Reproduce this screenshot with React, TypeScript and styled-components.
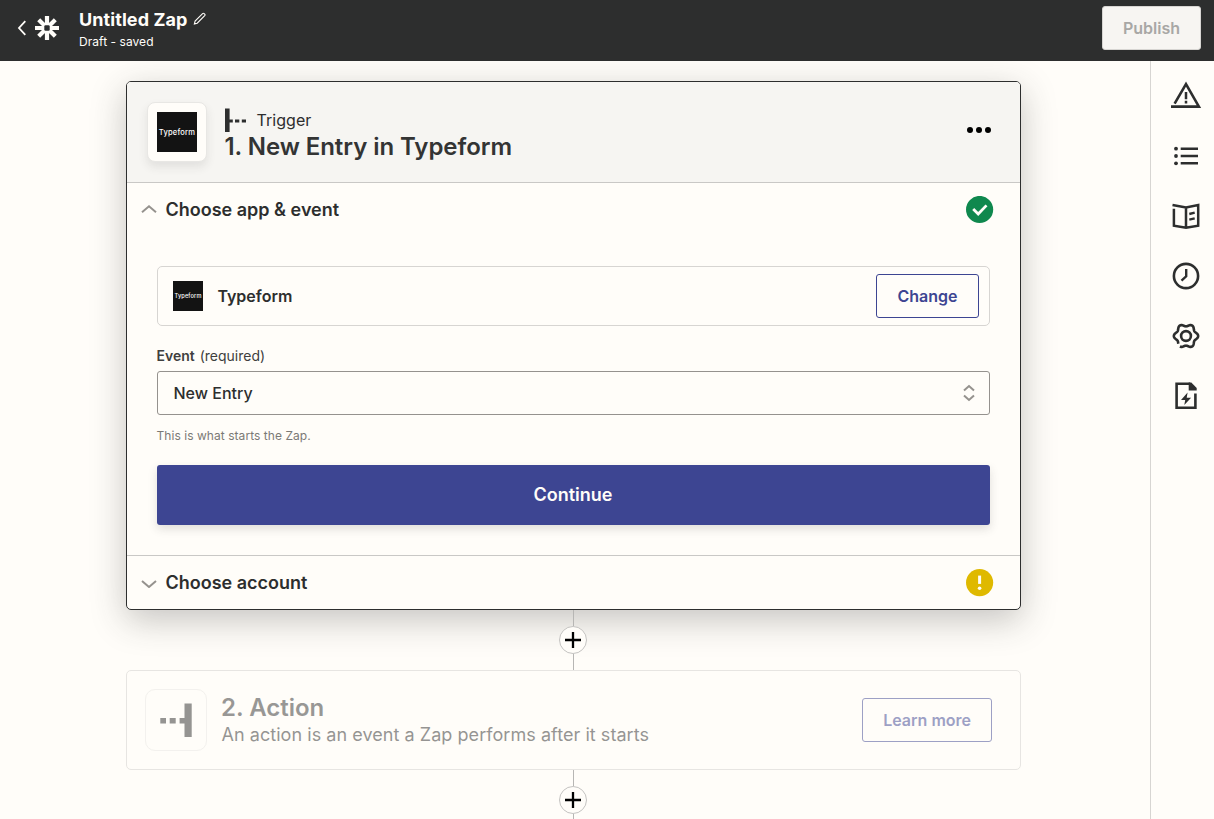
import React from 'react';
import styled, { createGlobalStyle } from 'styled-components';

const ink = '#2d2e2e';
const paper = '#fffdf9';
const indigo = '#3d4592';

const GlobalStyle = createGlobalStyle`
  *, *::before, *::after { box-sizing: border-box; }
  body {
    margin: 0;
    background: ${paper};
    color: ${ink};
    font-family: Inter, "Liberation Sans", sans-serif;
    overflow: hidden;
  }
  button { font-family: inherit; margin: 0; }
  svg { display: block; flex: none; }
`;

const Page = styled.div`
  display: flex;
  flex-direction: column;
  height: 100vh;
`;

const TopBar = styled.header`
  display: flex;
  align-items: flex-start;
  flex: none;
  height: 61px;
  padding: 6px 13px 0 17px;
  background: ${ink};
  color: ${paper};
`;

const BackLink = styled.div`
  display: flex;
  align-items: center;
  gap: 8px;
  height: 44px;
`;

const ZapTitle = styled.div`
  flex: 1;
  margin: 3px 0 0 20px;
`;

const TitleLine = styled.div`
  display: flex;
  align-items: center;
  gap: 6px;
  font-size: 18px;
  line-height: 22px;
  font-weight: 700;
  letter-spacing: 0.08px;
`;

const PencilIcon = styled.svg`
  margin-top: -3px;
`;

const Status = styled.div`
  margin-top: 3px;
  font-size: 12px;
  line-height: 16px;
  letter-spacing: 0.05px;
`;

const Button = styled.button<{ $tone: 'disabled' | 'outline' }>`
  height: 44px;
  padding: 0 20px;
  border-radius: 3px;
  border: 1px solid ${p => (p.$tone === 'disabled' ? '#d7d5d2' : indigo)};
  background: ${p => (p.$tone === 'disabled' ? '#f7f5f2' : 'transparent')};
  color: ${p => (p.$tone === 'disabled' ? '#a8a7a5' : indigo)};
  font-size: 16px;
  font-weight: 600;
  white-space: nowrap;
`;

const ChangeButton = styled(Button)`
  width: 103px;
`;

const Body = styled.div`
  display: flex;
  flex: 1;
  min-height: 0;
`;

const Canvas = styled.main`
  display: flex;
  flex-direction: column;
  align-items: center;
  flex: 1;
  padding: 20px 129px 0 126px;
  overflow: hidden;
`;

const Rail = styled.nav`
  display: flex;
  flex-direction: column;
  align-items: center;
  gap: 28px;
  width: 64px;
  padding: 19px 0 0 7px;
  border-left: 1px solid #d7d5d2;
`;

const StepCard = styled.section`
  flex: none;
  width: 100%;
  height: 529px;
  border: 1px solid ${ink};
  border-radius: 5px;
  background: ${paper};
  box-shadow: 0 10px 35px rgba(45, 46, 46, 0.28);
`;

const StepHeader = styled.div`
  display: flex;
  align-items: flex-start;
  height: 101px;
  padding: 20px 28px 0 20px;
  border-bottom: 1px solid #c9c8c6;
  border-radius: 4px 4px 0 0;
  background: #f6f5f2;
`;

const AppTile = styled.div`
  display: flex;
  align-items: center;
  justify-content: center;
  width: 60px;
  height: 60px;
  border: 1px solid #e8e7e4;
  border-radius: 8px;
  background: ${paper};
  box-shadow: 0 5px 10px rgba(45, 46, 46, 0.1);
`;

const AppLogo = styled.div<{ $size: number }>`
  display: flex;
  align-items: center;
  justify-content: center;
  flex: none;
  width: ${p => p.$size}px;
  height: ${p => p.$size}px;
  padding-top: 1px;
  background: #131313;
  color: #fff;
  font-size: ${p => p.$size * 0.188}px;
  line-height: 1;
  letter-spacing: ${p => p.$size * 0.005}px;
  font-weight: 500;
`;

const StepHeading = styled.div`
  flex: 1;
  margin: 5px 0 0 18px;
`;

const Kind = styled.div`
  display: flex;
  align-items: center;
  gap: 10.5px;
  height: 26px;
  font-size: 16px;
  letter-spacing: 0.05px;
`;

const StepName = styled.h2`
  margin: 0 0 0 -0.5px;
  font-size: 24px;
  line-height: 28px;
  font-weight: 600;
  letter-spacing: -0.05px;
  color: #333434;
`;

const ActionName = styled(StepName)`
  letter-spacing: 0;
`;

const MenuDots = styled.div`
  margin-top: 25px;
`;

const SectionRow = styled.div<{ $divided?: boolean }>`
  display: flex;
  align-items: center;
  height: ${p => (p.$divided ? 54 : 53)}px;
  padding: 0 26px 0 14px;
  border-top: ${p => (p.$divided ? '1px solid #c9c8c6' : 'none')};
`;

const SectionName = styled.h3`
  flex: 1;
  margin: 0 0 0 8.5px;
  font-size: 18px;
  line-height: 24px;
  font-weight: 600;
`;

const SectionBody = styled.div`
  height: 319px;
  padding: 30px 30px 0;
`;

const AppRow = styled.div`
  display: flex;
  align-items: center;
  height: 60px;
  padding: 0 10px 0 15px;
  border: 1px solid #d7d5d2;
  border-radius: 5px;
`;

const AppName = styled.span`
  flex: 1;
  margin-left: 14.4px;
  font-size: 16px;
  font-weight: 600;
`;

const FieldLabel = styled.div`
  margin: 20px 0 5px -0.5px;
  font-size: 14px;
  line-height: 20px;
  color: #403f3e;

  b { font-weight: 600; margin-right: 1px; }
`;

const Select = styled.div`
  display: flex;
  align-items: center;
  justify-content: space-between;
  height: 44px;
  padding: 0 14px 0 15.5px;
  border: 1px solid #95928e;
  border-radius: 3px;
  font-size: 16px;
  font-weight: 500;
`;

const Hint = styled.div`
  margin: 12px 0 0 -0.5px;
  font-size: 12px;
  line-height: 18px;
  letter-spacing: 0.05px;
  color: #7b7976;
`;

const ContinueButton = styled.button`
  display: block;
  width: 100%;
  height: 60px;
  margin-top: 20px;
  padding: 0 1px 2px 0;
  border: none;
  border-radius: 3px;
  background: ${indigo};
  color: ${paper};
  font-size: 18px;
  font-weight: 600;
  box-shadow: 0 4px 10px rgba(45, 46, 46, 0.15);
`;

const Connector = styled.div`
  display: flex;
  flex-direction: column;
  align-items: center;
  flex: none;
  height: 60px;
`;

const Stem = styled.div`
  width: 1px;
  height: 16px;
  background: #b7b6b4;
`;

const AddStep = styled.div`
  display: flex;
  align-items: center;
  justify-content: center;
  width: 28px;
  height: 28px;
  margin-right: 1px;
  border: 1px solid #c4c3c1;
  border-radius: 50%;
  background: ${paper};
`;

const ActionCard = styled.section`
  display: flex;
  align-items: center;
  flex: none;
  width: 100%;
  height: 100px;
  padding: 0 28px 0 18px;
  border: 1px solid #d0cfcc;
  border-radius: 5px;
  background: ${paper};
  opacity: 0.5;
`;

const ActionTile = styled.div`
  display: flex;
  align-items: center;
  justify-content: center;
  width: 62px;
  height: 62px;
  border: 1px solid #e8e7e4;
  border-radius: 10px;
`;

const ActionText = styled.div`
  flex: 1;
  margin-left: 14.5px;
  padding-top: 2px;

  p {
    margin: 0;
    font-size: 18px;
    line-height: 26px;
    letter-spacing: 0.05px;
  }
`;

const gearOutline = Array.from({ length: 116 }, (_, i) => {
  const deg = 135 + i * 3;
  const a = (deg * Math.PI) / 180;
  const r = 10.9 + 1.25 * Math.cos(6 * a);
  return `${i ? 'L' : 'M'}${(16 + r * Math.cos(a)).toFixed(2)} ${(16 + r * Math.sin(a)).toFixed(2)}`;
}).join('');

const RailIcon = ({ children }: { children: React.ReactNode }) => (
  <svg width="32" height="32" viewBox="0 0 32 32" fill="none" stroke={ink} strokeWidth="2.6">
    {children}
  </svg>
);

const Chevron = ({ up }: { up?: boolean }) => (
  <svg width="16" height="10" viewBox="0 0 16 10" fill="none" stroke="#95928e" strokeWidth="2">
    <path d={up ? 'M1 7.2 8 1.3l7 5.9' : 'M1 3 8 9l7-6'} />
  </svg>
);

const AddConnector = () => (
  <Connector>
    <Stem />
    <AddStep>
      <svg width="16" height="16" viewBox="0 0 16 16" stroke="#000" strokeWidth="2.3">
        <path d="M8 0v16M0 8h16" />
      </svg>
    </AddStep>
    <Stem />
  </Connector>
);

export default function App() {
  return (
    <Page>
      <GlobalStyle />
      <TopBar>
        <BackLink>
          <svg width="10" height="16" viewBox="0 0 10 16" fill="none" stroke={paper} strokeWidth="1.8">
            <path d="M8.3 1.2 2 8l6.3 6.8" />
          </svg>
          <svg width="24" height="24" viewBox="0 0 24 24" fill="none" stroke={paper} strokeWidth="4.2">
            <path d="M12 0v24M0 12h24M3.7 3.7l16.6 16.6M20.3 3.7 3.7 20.3" />
            <rect x="9.3" y="9.3" width="5.4" height="5.4" rx="1.2" fill={ink} stroke="none" />
          </svg>
        </BackLink>
        <ZapTitle>
          <TitleLine>
            Untitled Zap
            <PencilIcon width="13" height="13" viewBox="0 0 13 13" fill="none" stroke={paper} strokeWidth="1.1">
              <path d="M1.4 11.9l.7-2.8L9.6 1.6a1.1 1.1 0 0 1 1.5 0l.6.6a1.1 1.1 0 0 1 0 1.5L4.2 11.2z" />
            </PencilIcon>
          </TitleLine>
          <Status>Draft - saved</Status>
        </ZapTitle>
        <Button $tone="disabled">Publish</Button>
      </TopBar>
      <Body>
        <Canvas>
          <StepCard>
            <StepHeader>
              <AppTile>
                <AppLogo $size={40}>Typeform</AppLogo>
              </AppTile>
              <StepHeading>
                <Kind>
                  <svg width="21" height="24" viewBox="0 0 21 24" fill={ink}>
                    <path d="M0 .4h4.6v23.8H0zM4.6 11.5h3.2v3H4.6zM10 11.5h4.3v3H10zM16.8 11.5H21v3h-4.2z" />
                  </svg>
                  Trigger
                </Kind>
                <StepName>1. New Entry in Typeform</StepName>
              </StepHeading>
              <MenuDots>
                <svg width="26" height="6" viewBox="0 0 26 6">
                  <circle cx="4" cy="3" r="3" />
                  <circle cx="13" cy="3" r="3" />
                  <circle cx="22" cy="3" r="3" />
                </svg>
              </MenuDots>
            </StepHeader>
            <SectionRow>
              <Chevron up />
              <SectionName>Choose app &amp; event</SectionName>
              <svg width="28" height="28" viewBox="0.4 0.5 28 28" fill="none">
                <circle cx="14" cy="14" r="13.6" fill="#0f884e" />
                <path d="M7.6 13.6l5 4.9 8.3-8.6" stroke={paper} strokeWidth="2.8" />
              </svg>
            </SectionRow>
            <SectionBody>
              <AppRow>
                <AppLogo $size={30}>Typeform</AppLogo>
                <AppName>Typeform</AppName>
                <ChangeButton $tone="outline">Change</ChangeButton>
              </AppRow>
              <FieldLabel>
                <b>Event</b> (required)
              </FieldLabel>
              <Select>
                New Entry
                <svg width="12" height="18" viewBox="0 0 12 18" fill="none" stroke="#95928e" strokeWidth="2">
                  <path d="M1 6.6 6 2l5 4.6M1 11.4 6 16l5-4.6" />
                </svg>
              </Select>
              <Hint>This is what starts the Zap.</Hint>
              <ContinueButton>Continue</ContinueButton>
            </SectionBody>
            <SectionRow $divided>
              <Chevron />
              <SectionName>Choose account</SectionName>
              <svg width="28" height="28" viewBox="0.4 0 28 28">
                <circle cx="14" cy="13.6" r="13.6" fill="#dfb900" />
                <path d="M12.5 6.6h3v8.3h-3z" fill={paper} />
                <circle cx="14" cy="19.2" r="1.8" fill={paper} />
              </svg>
            </SectionRow>
          </StepCard>
          <AddConnector />
          <ActionCard>
            <ActionTile>
              <svg width="32" height="34" viewBox="0 -0.6 32 34" fill={ink}>
                <path d="M24.5 0h7.2v33.4h-7.2zM.3 14.3H6V20H.3zM9.7 14.3h6V20h-6zM19.6 14.3h5V20h-5z" />
              </svg>
            </ActionTile>
            <ActionText>
              <ActionName>2. Action</ActionName>
              <p>An action is an event a Zap performs after it starts</p>
            </ActionText>
            <Button $tone="outline">Learn more</Button>
          </ActionCard>
          <AddConnector />
        </Canvas>
        <Rail>
          <RailIcon>
            <path d="M4.6 23.6 16 4.2l12.9 22.4H1" />
            <path d="M16 12v7.2M16 20.8v2.6" strokeWidth="2.5" />
          </RailIcon>
          <RailIcon>
            <path d="M10.7 8.7H28M10.7 16H28M10.7 23.3H28" strokeWidth="2.4" />
            <g fill={ink} stroke="none">
              <circle cx="6" cy="8.7" r="1.9" />
              <circle cx="6" cy="16" r="1.9" />
              <circle cx="6" cy="23.3" r="1.9" />
            </g>
          </RailIcon>
          <RailIcon>
            <path d="M2.5 4.9 16 7.5l12.2-2.4v20.7L16 27.7 3.9 25.8V8.8M16 7.5v20.2" strokeWidth="2.5" />
            <path d="M19.3 14l5.4-1.3M19.3 19.6l5.4-1.3" strokeWidth="2.4" />
          </RailIcon>
          <RailIcon>
            <circle cx="16" cy="16" r="12.1" />
            <path d="M16.2 9v7.3l-4.7 4.4" strokeWidth="2.4" />
          </RailIcon>
          <RailIcon>
            <path d={gearOutline} strokeLinejoin="round" />
            <circle cx="16" cy="16" r="4.9" />
          </RailIcon>
          <RailIcon>
            <path d="M25.4 13.5v14.2H6.6V3.7H20" />
            <path d="M18.7 2.4h2.6l5.4 5.6v2.6h-8z" fill={ink} stroke="none" />
            <path d="M17.6 12.6 11 20.1h4.2l-.9 5 6.8-7.4h-4.4z" fill={ink} stroke="none" />
          </RailIcon>
        </Rail>
      </Body>
    </Page>
  );
}
